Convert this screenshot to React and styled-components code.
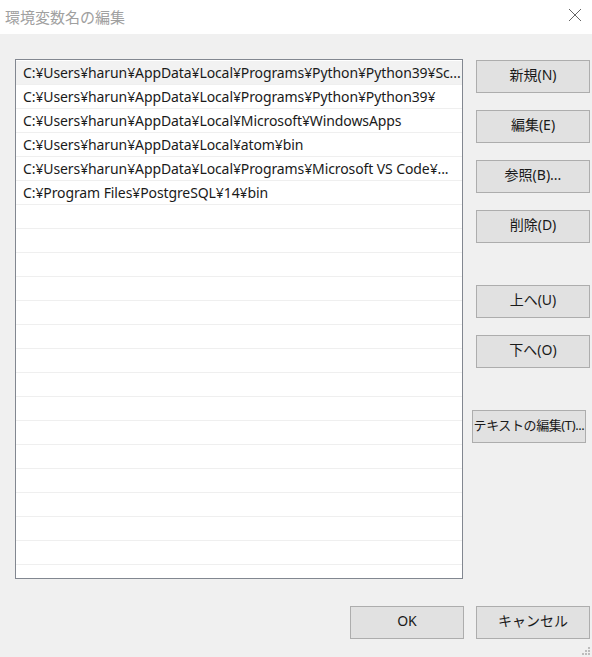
import React from 'react';
import styled, { createGlobalStyle } from 'styled-components';

const GlobalStyle = createGlobalStyle`
  html, body {
    margin: 0;
    padding: 0;
    background: #f0f0f0;
  }
  body {
    font-family: "Noto Sans", "Noto Sans CJK JP", sans-serif;
  }
`;

const Window = styled.div`
  width: 592px;
  height: 657px;
  background: #f0f0f0;
  display: flex;
  flex-direction: column;
  position: relative;
  overflow: hidden;
`;

const TitleBar = styled.div`
  height: 34px;
  background: #ffffff;
  display: flex;
  align-items: center;
  justify-content: space-between;
  padding: 0 10px 0 5px;
  box-sizing: border-box;
`;

const Title = styled.span`
  font-family: "Noto Sans CJK JP", sans-serif;
  font-size: 15px;
  color: #a0a0a0;
  margin-top: -2px;
`;

const Close = styled.svg`
  width: 14px;
  height: 14px;
  margin-top: -4px;
`;

const Main = styled.div`
  display: flex;
  padding: 25px 0 0 15px;
  gap: 13px;
`;

const List = styled.div`
  width: 448px;
  height: 520px;
  border: 1px solid #828790;
  background: #ffffff;
  box-sizing: border-box;
  overflow: hidden;
  padding-top: 1px;
`;

const Row = styled.div`
  height: 24px;
  box-sizing: border-box;
  border-bottom: 1px solid #efefef;
  background: ${p => (p.selected ? '#f2f2f2' : '#ffffff')};
  padding-left: 7px;
  font-size: 14px;
  line-height: 23px;
  letter-spacing: -0.1px;
  color: #1a1a1a;
  white-space: nowrap;
  overflow: hidden;
`;

const Buttons = styled.div`
  display: flex;
  flex-direction: column;
  padding-top: 1px;
`;

const Button = styled.button`
  width: 114px;
  height: 33px;
  margin-top: ${p => p.gap || 0}px;
  margin-left: ${p => p.shift || 0}px;
  background: #e1e1e1;
  border: 1px solid #adadad;
  border-radius: 0;
  font-family: "Noto Sans", "Noto Sans CJK JP", sans-serif;
  font-size: ${p => (p.tight ? 13 : 14)}px;
  line-height: 18px;
  color: #1a1a1a;
  padding: 0 0 3px;
  white-space: nowrap;
  overflow: visible;
  letter-spacing: ${p => (p.tight ? '-0.4px' : '0')};
`;

const Footer = styled.div`
  display: flex;
  justify-content: flex-end;
  gap: 12px;
  padding: 27px 2px 0 0;
`;

const Grip = styled.svg`
  position: absolute;
  right: 1px;
  bottom: 1px;
  width: 10px;
  height: 10px;
`;

const paths = [
  'C:¥Users¥harun¥AppData¥Local¥Programs¥Python¥Python39¥Sc...',
  'C:¥Users¥harun¥AppData¥Local¥Programs¥Python¥Python39¥',
  'C:¥Users¥harun¥AppData¥Local¥Microsoft¥WindowsApps',
  'C:¥Users¥harun¥AppData¥Local¥atom¥bin',
  'C:¥Users¥harun¥AppData¥Local¥Programs¥Microsoft VS Code¥...',
  'C:¥Program Files¥PostgreSQL¥14¥bin',
];

const rows = [...paths, ...Array(16).fill('')];

export default function App() {
  return (
    <>
      <GlobalStyle />
      <Window>
        <TitleBar>
          <Title>環境変数名の編集</Title>
          <Close viewBox="0 0 14 14">
            <path d="M1 1 L13 13 M13 1 L1 13" stroke="#666" strokeWidth="1" fill="none" />
          </Close>
        </TitleBar>
        <Main>
          <List>
            {rows.map((text, i) => (
              <Row key={i} selected={i === 0}>{text}</Row>
            ))}
          </List>
          <Buttons>
            <Button>新規(N)</Button>
            <Button gap={17}>編集(E)</Button>
            <Button gap={17}>参照(B)...</Button>
            <Button gap={17}>削除(D)</Button>
            <Button gap={42}>上へ(U)</Button>
            <Button gap={17}>下へ(O)</Button>
            <Button gap={42} shift={-4} tight>テキストの編集(T)...</Button>
          </Buttons>
        </Main>
        <Footer>
          <Button>OK</Button>
          <Button>キャンセル</Button>
        </Footer>
        <Grip viewBox="0 0 10 10">
          <rect x="7" y="1" width="2" height="2" fill="#bdbdbd" />
          <rect x="4" y="4" width="2" height="2" fill="#bdbdbd" />
          <rect x="7" y="4" width="2" height="2" fill="#bdbdbd" />
          <rect x="1" y="7" width="2" height="2" fill="#bdbdbd" />
          <rect x="4" y="7" width="2" height="2" fill="#bdbdbd" />
          <rect x="7" y="7" width="2" height="2" fill="#bdbdbd" />
        </Grip>
      </Window>
    </>
  );
}
